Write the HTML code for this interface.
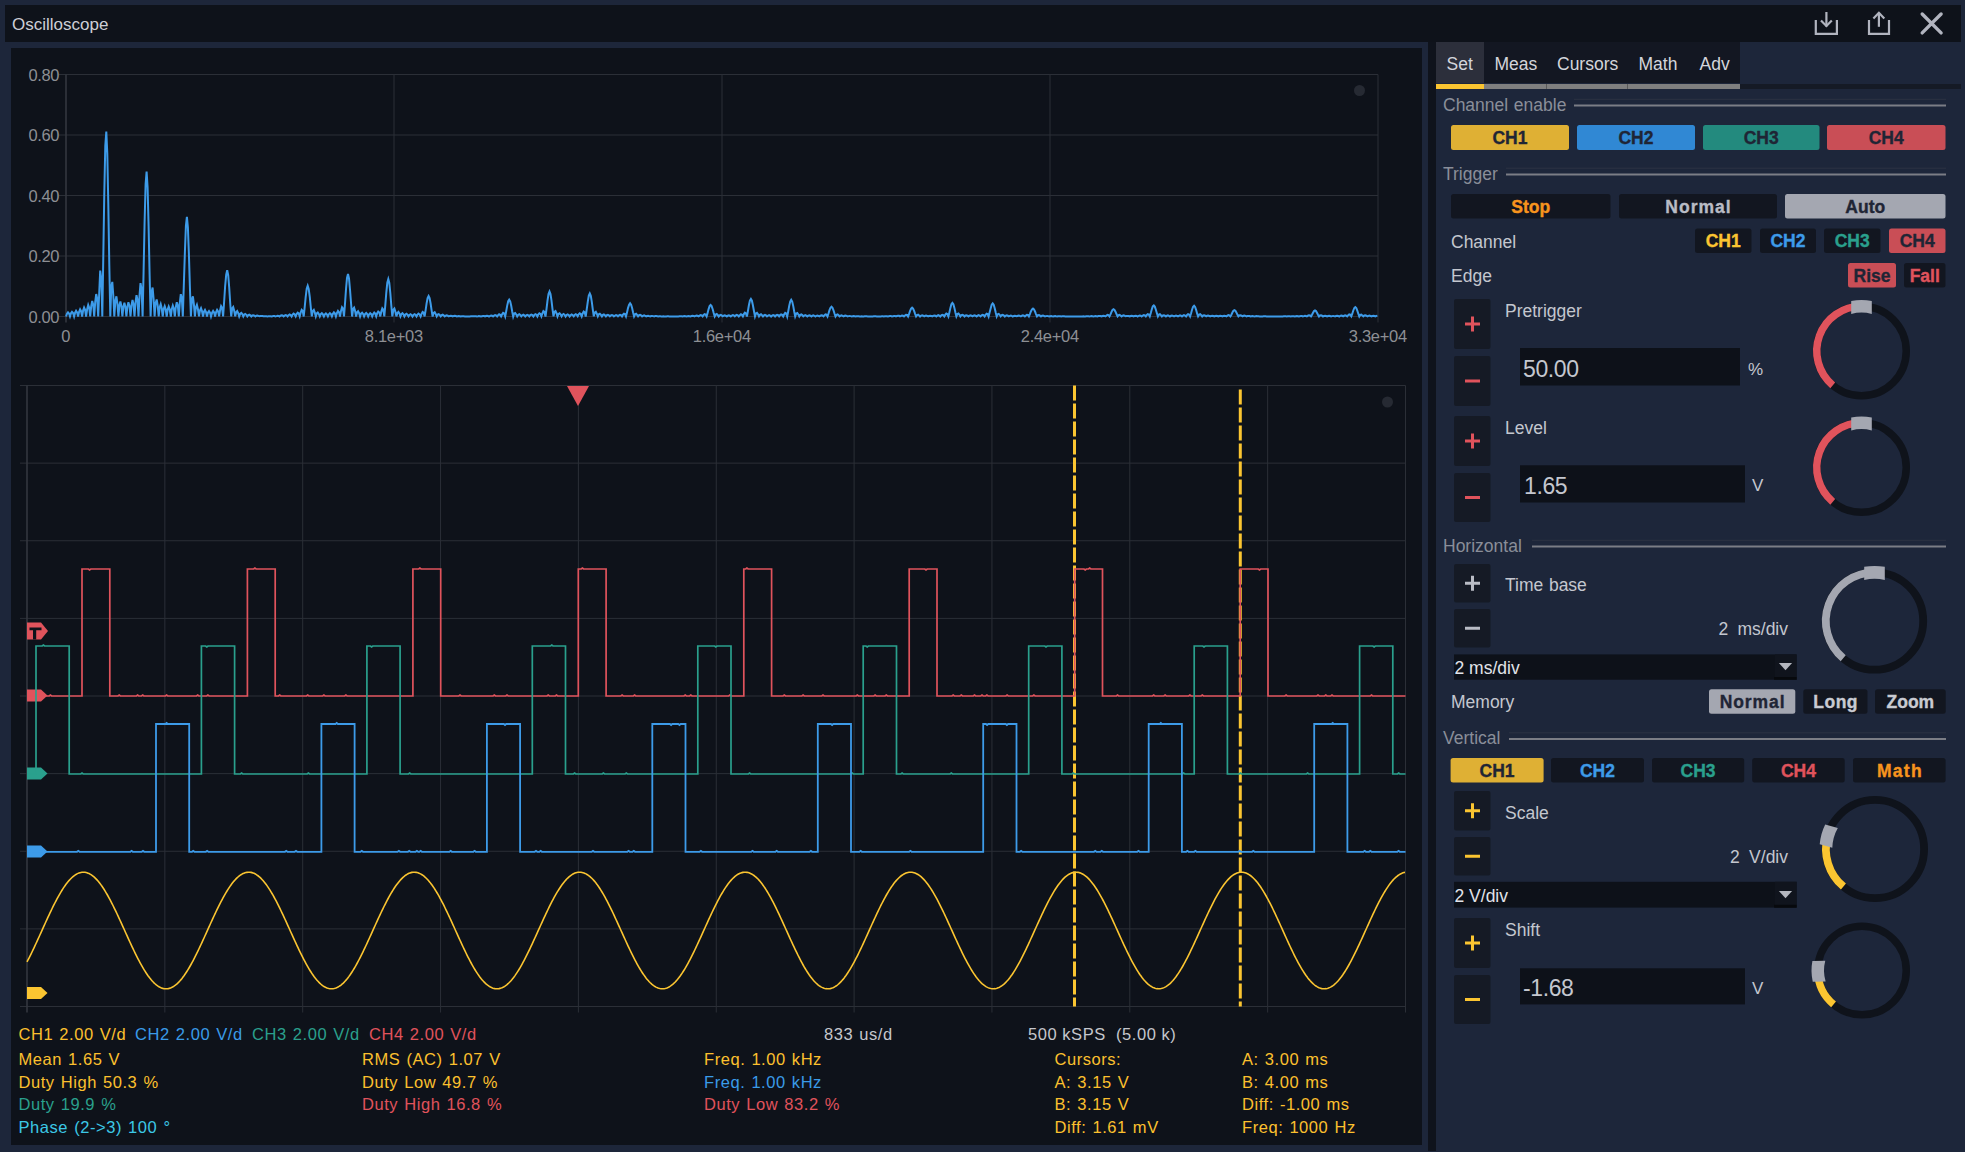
<!DOCTYPE html>
<html><head><meta charset="utf-8"><title>Oscilloscope</title>
<style>html,body{margin:0;padding:0;background:#1d263a;width:1965px;height:1152px;overflow:hidden}
text{font-family:"Liberation Sans", sans-serif}</style></head>
<body><svg width="1965" height="1152" viewBox="0 0 1965 1152" style="display:block"><rect x="0" y="0" width="1965" height="1152" fill="#1d263a" />
<rect x="5" y="5" width="1956" height="37" fill="#0e121a" />
<text x="12" y="29.6" font-size="17" fill="#cdcfd6" style="white-space:pre" >Oscilloscope</text>
<g fill="none" stroke="#b1b4bf" stroke-width="2.2"><path d="M1815.8,20 V33.8 H1836.9 V20"/><path d="M1826.4,12 V26.5"/><path d="M1821,20.5 L1826.4,26 L1831.8,20.5"/><path d="M1869,20 V33.8 H1889 V20"/><path d="M1878.9,12.8 V26.8"/><path d="M1873.4,18.4 L1878.9,12.8 L1884.3,18.4"/></g>
<path d="M1922.2,14 L1941.1,32.9 M1941.1,14 L1922.2,32.9" stroke="#b1b4bf" stroke-width="3.4" stroke-linecap="round"/>
<rect x="11" y="48" width="1411" height="1097" fill="#0e121a" />
<rect x="1428" y="42" width="8" height="1109" fill="#0f131c" />
<line x1="59" y1="74.5" x2="1378" y2="74.5" stroke="#2b2f37" stroke-width="1" />
<text x="59" y="80.9" font-size="16.5" fill="#8d8f94" text-anchor="end" letter-spacing="-0.4" style="white-space:pre" >0.80</text>
<line x1="59" y1="135.0" x2="1378" y2="135.0" stroke="#2b2f37" stroke-width="1" />
<text x="59" y="141.4" font-size="16.5" fill="#8d8f94" text-anchor="end" letter-spacing="-0.4" style="white-space:pre" >0.60</text>
<line x1="59" y1="195.5" x2="1378" y2="195.5" stroke="#2b2f37" stroke-width="1" />
<text x="59" y="201.9" font-size="16.5" fill="#8d8f94" text-anchor="end" letter-spacing="-0.4" style="white-space:pre" >0.40</text>
<line x1="59" y1="256.0" x2="1378" y2="256.0" stroke="#2b2f37" stroke-width="1" />
<text x="59" y="262.4" font-size="16.5" fill="#8d8f94" text-anchor="end" letter-spacing="-0.4" style="white-space:pre" >0.20</text>
<line x1="59" y1="316.5" x2="1378" y2="316.5" stroke="#2b2f37" stroke-width="1" />
<text x="59" y="322.9" font-size="16.5" fill="#8d8f94" text-anchor="end" letter-spacing="-0.4" style="white-space:pre" >0.00</text>
<line x1="66.0" y1="74.5" x2="66.0" y2="322.5" stroke="#34373f" stroke-width="1.6" />
<text x="65.8" y="341.8" font-size="16.5" fill="#8d8f94" text-anchor="middle" letter-spacing="-0.3" style="white-space:pre" >0</text>
<line x1="394.0" y1="74.5" x2="394.0" y2="322.5" stroke="#2b2f37" stroke-width="1" />
<text x="393.8" y="341.8" font-size="16.5" fill="#8d8f94" text-anchor="middle" letter-spacing="-0.3" style="white-space:pre" >8.1e+03</text>
<line x1="722.0" y1="74.5" x2="722.0" y2="322.5" stroke="#2b2f37" stroke-width="1" />
<text x="721.8" y="341.8" font-size="16.5" fill="#8d8f94" text-anchor="middle" letter-spacing="-0.3" style="white-space:pre" >1.6e+04</text>
<line x1="1050.0" y1="74.5" x2="1050.0" y2="322.5" stroke="#2b2f37" stroke-width="1" />
<text x="1049.8" y="341.8" font-size="16.5" fill="#8d8f94" text-anchor="middle" letter-spacing="-0.3" style="white-space:pre" >2.4e+04</text>
<line x1="1378.0" y1="74.5" x2="1378.0" y2="322.5" stroke="#2b2f37" stroke-width="1" />
<text x="1377.8" y="341.8" font-size="16.5" fill="#8d8f94" text-anchor="middle" letter-spacing="-0.3" style="white-space:pre" >3.3e+04</text>
<circle cx="1359.5" cy="90.5" r="5.5" fill="#262a33"/>
<polyline points="66.0,316.5 67.0,313.7 68.0,312.4 69.0,313.5 70.0,316.5 71.0,313.3 72.0,311.8 73.1,313.0 74.1,316.5 75.1,312.7 76.1,310.8 77.1,312.3 78.1,316.5 79.1,311.8 80.1,309.4 81.1,311.2 82.1,316.5 83.1,310.6 84.1,307.6 85.1,309.8 86.1,316.5 87.2,308.9 88.2,305.0 89.2,307.8 90.2,316.4 91.2,306.3 92.2,300.9 93.2,304.5 94.2,316.5 95.2,302.1 96.2,294.0 97.2,298.7 98.2,316.5 99.2,293.3 100.2,270.6 101.3,278.5 102.3,316.4 103.3,256.5 104.3,192.6 105.3,145.7 106.3,131.5 107.3,153.9 108.3,204.2 109.3,264.7 110.3,316.4 111.3,286.7 112.3,281.9 113.3,295.8 114.3,316.5 115.4,300.6 116.4,296.3 117.4,303.5 118.4,316.4 119.4,305.3 120.4,301.4 121.4,306.2 122.4,316.4 123.4,306.7 124.4,302.8 125.4,306.8 126.4,316.4 127.4,306.6 128.4,302.2 129.5,306.1 130.5,316.4 131.5,305.4 132.5,300.0 133.5,304.2 134.5,316.4 135.5,302.6 136.5,295.2 137.5,300.0 138.5,316.5 139.5,295.9 140.5,283.1 141.5,288.6 142.6,316.5 143.6,271.2 144.6,221.8 145.6,184.3 146.6,171.5 147.6,187.6 148.6,226.4 149.6,274.4 150.6,316.4 151.6,291.8 152.6,287.6 153.6,299.1 154.6,316.5 155.6,303.2 156.7,299.5 157.7,305.6 158.7,316.5 159.7,307.2 160.7,304.2 161.7,308.3 162.7,316.5 163.7,308.9 164.7,306.1 165.7,309.3 166.7,316.5 167.7,309.5 168.7,306.5 169.7,309.3 170.8,316.5 171.8,309.0 172.8,305.5 173.8,308.4 174.8,316.4 175.8,307.1 176.8,302.2 177.8,305.4 178.8,316.4 179.8,302.9 180.8,294.2 181.8,297.8 182.8,316.4 183.8,285.7 184.9,251.9 185.9,226.0 186.9,216.8 187.9,227.5 188.9,254.1 189.9,287.4 190.9,316.4 191.9,299.2 192.9,296.3 193.9,304.4 194.9,316.5 195.9,307.2 196.9,304.8 197.9,309.0 199.0,316.4 200.0,310.2 201.0,308.2 202.0,311.1 203.0,316.5 204.0,311.7 205.0,310.0 206.0,312.1 207.0,316.4 208.0,312.5 209.0,311.0 210.0,312.6 211.0,316.5 212.1,312.7 213.1,311.0 214.1,312.5 215.1,316.4 216.1,312.1 217.1,309.8 218.1,311.4 219.1,316.4 220.1,310.1 221.1,306.1 222.1,307.8 223.1,316.5 224.1,302.3 225.1,286.7 226.2,274.6 227.2,270.3 228.2,275.2 229.2,287.5 230.2,303.0 231.2,316.4 232.2,308.4 233.2,307.0 234.2,310.8 235.2,316.3 236.2,312.2 237.2,311.1 238.2,313.1 239.2,316.4 240.3,313.6 241.3,312.8 242.3,314.1 243.3,316.4 244.3,314.5 245.3,313.9 246.3,314.8 247.3,316.4 248.3,315.1 249.3,314.6 250.3,315.3 251.3,316.5 252.3,315.5 253.3,315.2 254.4,315.6 255.4,316.5 256.4,315.8 257.4,315.6 258.4,315.9 259.4,316.3 260.4,316.1 261.4,316.0 262.4,316.1 263.4,316.3 264.4,316.3 265.4,316.3 266.4,316.3 267.4,316.4 268.5,316.3 269.5,316.2 270.5,316.3 271.5,316.5 272.5,316.2 273.5,315.9 274.5,316.0 275.5,316.4 276.5,316.1 277.5,315.7 278.5,315.9 279.5,316.5 280.5,315.7 281.6,315.3 282.6,315.5 283.6,316.4 284.6,315.6 285.6,315.0 286.6,315.3 287.6,316.5 288.6,315.2 289.6,314.5 290.6,315.0 291.6,316.5 292.6,314.6 293.6,313.6 294.6,314.2 295.7,316.4 296.7,314.1 297.7,312.6 298.7,313.4 299.7,316.3 300.7,312.5 301.7,309.9 302.7,310.9 303.7,316.5 304.7,307.2 305.7,296.8 306.7,288.7 307.7,285.7 308.7,288.9 309.8,297.1 310.8,307.5 311.8,316.3 312.8,310.9 313.8,309.9 314.8,312.5 315.8,316.4 316.8,313.4 317.8,312.5 318.8,313.9 319.8,316.4 320.8,314.1 321.8,313.2 322.8,314.2 323.9,316.5 324.9,314.3 325.9,313.4 326.9,314.3 327.9,316.4 328.9,314.2 329.9,313.1 330.9,314.0 331.9,316.4 332.9,313.8 333.9,312.4 334.9,313.4 335.9,316.5 337.0,312.9 338.0,310.9 339.0,312.1 340.0,316.5 341.0,310.9 342.0,307.2 343.0,308.6 344.0,316.4 345.0,303.6 346.0,289.2 347.0,278.0 348.0,273.9 349.0,278.3 350.0,289.5 351.1,303.8 352.1,316.5 353.1,309.0 354.1,307.7 355.1,311.1 356.1,316.5 357.1,312.3 358.1,311.2 359.1,313.1 360.1,316.4 361.1,313.5 362.1,312.6 363.1,313.9 364.1,316.4 365.2,313.9 366.2,313.0 367.2,314.1 368.2,316.5 369.2,314.2 370.2,313.2 371.2,314.1 372.2,316.4 373.2,313.9 374.2,312.6 375.2,313.6 376.2,316.4 377.2,313.2 378.2,311.5 379.3,312.6 380.3,316.4 381.3,311.6 382.3,308.4 383.3,309.7 384.3,316.4 385.3,305.2 386.3,292.6 387.3,282.8 388.3,279.2 389.3,283.0 390.3,292.9 391.3,305.4 392.3,316.4 393.4,309.8 394.4,308.6 395.4,311.7 396.4,316.4 397.4,312.9 398.4,311.9 399.4,313.5 400.4,316.4 401.4,314.0 402.4,313.2 403.4,314.3 404.4,316.5 405.4,314.5 406.5,313.8 407.5,314.6 408.5,316.4 409.5,314.9 410.5,314.2 411.5,314.9 412.5,316.5 413.5,314.9 414.5,314.2 415.5,314.8 416.5,316.5 417.5,314.6 418.5,313.6 419.5,314.3 420.6,316.5 421.6,313.8 422.6,312.0 423.6,312.7 424.6,316.4 425.6,310.3 426.6,303.4 427.6,298.0 428.6,296.0 429.6,298.0 430.6,303.5 431.6,310.4 432.6,316.5 433.6,312.9 434.7,312.2 435.7,313.9 436.7,316.4 437.7,314.6 438.7,314.1 439.7,315.0 440.7,316.4 441.7,315.1 442.7,314.7 443.7,315.3 444.7,316.4 445.7,315.7 446.7,315.3 447.7,315.7 448.8,316.4 449.8,315.9 450.8,315.7 451.8,316.0 452.8,316.4 453.8,315.9 454.8,315.8 455.8,316.0 456.8,316.4 457.8,316.2 458.8,316.1 459.8,316.2 460.8,316.5 461.8,316.3 462.9,316.3 463.9,316.3 464.9,316.4 465.9,316.4 466.9,316.4 467.9,316.4 468.9,316.4 469.9,316.4 470.9,316.3 471.9,316.3 472.9,316.3 473.9,316.3 474.9,316.2 476.0,316.3 477.0,316.4 478.0,316.3 479.0,316.1 480.0,316.2 481.0,316.5 482.0,316.2 483.0,316.0 484.0,316.1 485.0,316.5 486.0,316.0 487.0,315.7 488.0,315.9 489.0,316.5 490.1,315.8 491.1,315.5 492.1,315.7 493.1,316.5 494.1,315.6 495.1,315.1 496.1,315.4 497.1,316.4 498.1,315.1 499.1,314.3 500.1,314.8 501.1,316.4 502.1,314.3 503.1,312.9 504.2,313.5 505.2,316.4 506.2,311.3 507.2,305.6 508.2,301.2 509.2,299.6 510.2,301.3 511.2,305.8 512.2,311.5 513.2,316.5 514.2,313.5 515.2,313.0 516.2,314.4 517.2,316.4 518.3,314.7 519.3,314.2 520.3,314.9 521.3,316.3 522.3,315.2 523.3,314.7 524.3,315.3 525.3,316.5 526.3,315.4 527.3,314.9 528.3,315.4 529.3,316.4 530.3,315.1 531.3,314.6 532.4,315.1 533.4,316.5 534.4,314.9 535.4,314.1 536.4,314.7 537.4,316.5 538.4,314.4 539.4,313.3 540.4,313.9 541.4,316.4 542.4,313.3 543.4,311.1 544.4,311.9 545.5,316.5 546.5,309.0 547.5,300.6 548.5,294.0 549.5,291.5 550.5,294.1 551.5,300.7 552.5,309.1 553.5,316.4 554.5,311.9 555.5,311.1 556.5,313.2 557.5,316.5 558.5,314.0 559.6,313.3 560.6,314.4 561.6,316.4 562.6,314.6 563.6,314.0 564.6,314.8 565.6,316.5 566.6,315.0 567.6,314.4 568.6,315.0 569.6,316.5 570.6,315.1 571.6,314.4 572.6,315.0 573.7,316.4 574.7,314.9 575.7,314.2 576.7,314.8 577.7,316.3 578.7,314.4 579.7,313.3 580.7,314.0 581.7,316.4 582.7,313.5 583.7,311.5 584.7,312.3 585.7,316.5 586.7,309.5 587.8,301.7 588.8,295.6 589.8,293.4 590.8,295.8 591.8,301.9 592.8,309.6 593.8,316.3 594.8,312.5 595.8,311.8 596.8,313.7 597.8,316.4 598.8,314.2 599.8,313.7 600.8,314.7 601.9,316.4 602.9,314.9 603.9,314.4 604.9,315.2 605.9,316.4 606.9,315.2 607.9,314.8 608.9,315.3 609.9,316.4 610.9,315.4 611.9,315.0 612.9,315.4 613.9,316.4 615.0,315.5 616.0,315.0 617.0,315.4 618.0,316.4 619.0,315.4 620.0,314.8 621.0,315.2 622.0,316.4 623.0,314.7 624.0,313.6 625.0,314.0 626.0,316.4 627.0,312.6 628.0,308.1 629.1,304.7 630.1,303.3 631.1,304.6 632.1,308.0 633.1,312.4 634.1,316.3 635.1,314.3 636.1,313.8 637.1,314.9 638.1,316.4 639.1,315.2 640.1,314.8 641.1,315.4 642.1,316.4 643.2,315.7 644.2,315.4 645.2,315.8 646.2,316.4 647.2,316.0 648.2,315.8 649.2,316.1 650.2,316.4 651.2,316.0 652.2,315.9 653.2,316.1 654.2,316.4 655.2,316.1 656.2,316.1 657.3,316.2 658.3,316.5 659.3,316.3 660.3,316.3 661.3,316.4 662.3,316.4 663.3,316.3 664.3,316.4 665.3,316.5 666.3,316.4 667.3,316.3 668.3,316.3 669.3,316.4 670.4,316.5 671.4,316.5 672.4,316.4 673.4,316.4 674.4,316.4 675.4,316.4 676.4,316.5 677.4,316.5 678.4,316.4 679.4,316.3 680.4,316.2 681.4,316.3 682.4,316.5 683.4,316.3 684.5,316.1 685.5,316.2 686.5,316.4 687.5,316.2 688.5,316.1 689.5,316.2 690.5,316.4 691.5,316.0 692.5,315.8 693.5,315.9 694.5,316.4 695.5,315.9 696.5,315.6 697.5,315.8 698.6,316.4 699.6,315.6 700.6,315.1 701.6,315.4 702.6,316.5 703.6,315.0 704.6,314.1 705.6,314.5 706.6,316.4 707.6,312.9 708.6,309.1 709.6,306.1 710.6,305.0 711.6,306.1 712.7,309.2 713.7,313.0 714.7,316.4 715.7,314.5 716.7,314.0 717.7,315.0 718.7,316.5 719.7,315.3 720.7,314.9 721.7,315.4 722.7,316.3 723.7,315.7 724.7,315.4 725.7,315.7 726.8,316.4 727.8,315.6 728.8,315.3 729.8,315.7 730.8,316.4 731.8,315.5 732.8,315.1 733.8,315.4 734.8,316.4 735.8,315.4 736.8,314.9 737.8,315.3 738.8,316.4 739.9,315.1 740.9,314.3 741.9,314.8 742.9,316.4 743.9,314.1 744.9,312.7 745.9,313.3 746.9,316.5 747.9,311.2 748.9,305.3 749.9,300.6 750.9,298.9 751.9,300.7 752.9,305.3 754.0,311.2 755.0,316.3 756.0,313.4 757.0,312.8 758.0,314.2 759.0,316.4 760.0,314.8 761.0,314.3 762.0,315.1 763.0,316.4 764.0,315.3 765.0,314.8 766.0,315.3 767.0,316.4 768.1,315.5 769.1,315.0 770.1,315.5 771.1,316.5 772.1,315.5 773.1,315.0 774.1,315.4 775.1,316.5 776.1,315.4 777.1,314.8 778.1,315.2 779.1,316.4 780.1,315.1 781.1,314.4 782.2,314.9 783.2,316.4 784.2,314.3 785.2,312.9 786.2,313.4 787.2,316.5 788.2,311.5 789.2,305.9 790.2,301.5 791.2,299.8 792.2,301.5 793.2,305.9 794.2,311.5 795.2,316.4 796.3,313.5 797.3,313.0 798.3,314.4 799.3,316.4 800.3,314.9 801.3,314.4 802.3,315.1 803.3,316.4 804.3,315.5 805.3,315.1 806.3,315.6 807.3,316.4 808.3,315.6 809.4,315.3 810.4,315.7 811.4,316.5 812.4,315.7 813.4,315.4 814.4,315.8 815.4,316.5 816.4,315.8 817.4,315.5 818.4,315.8 819.4,316.4 820.4,315.6 821.4,315.2 822.4,315.5 823.5,316.4 824.5,315.2 825.5,314.4 826.5,314.7 827.5,316.5 828.5,313.5 829.5,310.2 830.5,307.7 831.5,306.7 832.5,307.7 833.5,310.3 834.5,313.5 835.5,316.4 836.5,314.9 837.6,314.5 838.6,315.3 839.6,316.4 840.6,315.7 841.6,315.4 842.6,315.8 843.6,316.4 844.6,315.8 845.6,315.6 846.6,315.9 847.6,316.4 848.6,316.1 849.6,315.9 850.6,316.1 851.7,316.4 852.7,316.2 853.7,316.1 854.7,316.2 855.7,316.4 856.7,316.2 857.7,316.2 858.7,316.3 859.7,316.5 860.7,316.4 861.7,316.3 862.7,316.4 863.7,316.4 864.7,316.3 865.8,316.3 866.8,316.3 867.8,316.4 868.8,316.4 869.8,316.5 870.8,316.5 871.8,316.4 872.8,316.4 873.8,316.3 874.8,316.3 875.8,316.3 876.8,316.4 877.8,316.4 878.9,316.4 879.9,316.4 880.9,316.4 881.9,316.3 882.9,316.3 883.9,316.4 884.9,316.3 885.9,316.2 886.9,316.2 887.9,316.4 888.9,316.2 889.9,316.1 890.9,316.1 891.9,316.4 893.0,316.2 894.0,316.0 895.0,316.1 896.0,316.4 897.0,315.9 898.0,315.7 899.0,315.8 900.0,316.4 901.0,315.9 902.0,315.5 903.0,315.7 904.0,316.5 905.0,315.4 906.0,314.7 907.1,314.9 908.1,316.5 909.1,313.9 910.1,310.9 911.1,308.6 912.1,307.7 913.1,308.6 914.1,310.9 915.1,313.8 916.1,316.4 917.1,315.0 918.1,314.7 919.1,315.4 920.1,316.5 921.2,315.6 922.2,315.3 923.2,315.7 924.2,316.3 925.2,315.8 926.2,315.5 927.2,315.8 928.2,316.4 929.2,315.9 930.2,315.7 931.2,315.9 932.2,316.4 933.2,315.8 934.2,315.5 935.3,315.7 936.3,316.5 937.3,315.7 938.3,315.2 939.3,315.6 940.3,316.5 941.3,315.4 942.3,314.8 943.3,315.1 944.3,316.5 945.3,314.7 946.3,313.6 947.3,314.1 948.4,316.5 949.4,312.4 950.4,307.9 951.4,304.3 952.4,303.0 953.4,304.3 954.4,307.9 955.4,312.4 956.4,316.4 957.4,314.1 958.4,313.6 959.4,314.7 960.4,316.4 961.4,315.2 962.5,314.8 963.5,315.4 964.5,316.5 965.5,315.5 966.5,315.2 967.5,315.6 968.5,316.4 969.5,315.7 970.5,315.4 971.5,315.7 972.5,316.4 973.5,315.7 974.5,315.3 975.5,315.7 976.6,316.4 977.6,315.6 978.6,315.1 979.6,315.5 980.6,316.4 981.6,315.4 982.6,314.8 983.6,315.2 984.6,316.5 985.6,314.8 986.6,313.7 987.6,314.1 988.6,316.5 989.6,312.6 990.7,308.2 991.7,304.7 992.7,303.4 993.7,304.7 994.7,308.2 995.7,312.5 996.7,316.4 997.7,314.2 998.7,313.8 999.7,314.8 1000.7,316.3 1001.7,315.2 1002.7,314.8 1003.7,315.4 1004.8,316.5 1005.8,315.6 1006.8,315.3 1007.8,315.7 1008.8,316.4 1009.8,315.9 1010.8,315.6 1011.8,315.9 1012.8,316.5 1013.8,315.9 1014.8,315.7 1015.8,316.0 1016.8,316.3 1017.9,315.8 1018.9,315.6 1019.9,315.9 1020.9,316.4 1021.9,315.7 1022.9,315.3 1023.9,315.6 1024.9,316.4 1025.9,315.5 1026.9,314.8 1027.9,315.0 1028.9,316.5 1029.9,314.1 1030.9,311.5 1032.0,309.4 1033.0,308.6 1034.0,309.4 1035.0,311.5 1036.0,314.1 1037.0,316.4 1038.0,315.2 1039.0,315.0 1040.0,315.6 1041.0,316.4 1042.0,315.7 1043.0,315.5 1044.0,315.9 1045.0,316.4 1046.1,316.1 1047.1,315.9 1048.1,316.1 1049.1,316.5 1050.1,316.2 1051.1,316.1 1052.1,316.3 1053.1,316.4 1054.1,316.2 1055.1,316.1 1056.1,316.3 1057.1,316.4 1058.1,316.2 1059.1,316.2 1060.2,316.3 1061.2,316.4 1062.2,316.3 1063.2,316.2 1064.2,316.3 1065.2,316.4 1066.2,316.4 1067.2,316.4 1068.2,316.4 1069.2,316.5 1070.2,316.5 1071.2,316.5 1072.2,316.5 1073.2,316.5 1074.3,316.4 1075.3,316.4 1076.3,316.4 1077.3,316.4 1078.3,316.4 1079.3,316.4 1080.3,316.4 1081.3,316.5 1082.3,316.4 1083.3,316.3 1084.3,316.4 1085.3,316.4 1086.3,316.2 1087.4,316.2 1088.4,316.2 1089.4,316.4 1090.4,316.3 1091.4,316.1 1092.4,316.2 1093.4,316.4 1094.4,316.3 1095.4,316.1 1096.4,316.2 1097.4,316.4 1098.4,316.0 1099.4,315.9 1100.4,316.0 1101.5,316.5 1102.5,316.0 1103.5,315.7 1104.5,315.9 1105.5,316.4 1106.5,315.5 1107.5,314.9 1108.5,315.1 1109.5,316.4 1110.5,314.4 1111.5,311.9 1112.5,310.0 1113.5,309.3 1114.5,310.0 1115.6,311.9 1116.6,314.3 1117.6,316.4 1118.6,315.2 1119.6,314.9 1120.6,315.5 1121.6,316.4 1122.6,315.7 1123.6,315.4 1124.6,315.7 1125.6,316.3 1126.6,316.1 1127.6,315.9 1128.6,316.0 1129.7,316.5 1130.7,316.0 1131.7,315.8 1132.7,316.0 1133.7,316.4 1134.7,315.9 1135.7,315.7 1136.7,315.9 1137.7,316.5 1138.7,315.8 1139.7,315.5 1140.7,315.7 1141.7,316.5 1142.8,315.6 1143.8,315.1 1144.8,315.4 1145.8,316.4 1146.8,315.0 1147.8,314.1 1148.8,314.5 1149.8,316.4 1150.8,313.1 1151.8,309.3 1152.8,306.4 1153.8,305.4 1154.8,306.6 1155.8,309.5 1156.9,313.2 1157.9,316.4 1158.9,314.5 1159.9,314.2 1160.9,315.1 1161.9,316.4 1162.9,315.4 1163.9,315.2 1164.9,315.7 1165.9,316.4 1166.9,315.6 1167.9,315.4 1168.9,315.8 1169.9,316.5 1171.0,315.8 1172.0,315.6 1173.0,315.9 1174.0,316.4 1175.0,315.8 1176.0,315.5 1177.0,315.8 1178.0,316.4 1179.0,315.8 1180.0,315.4 1181.0,315.7 1182.0,316.5 1183.0,315.6 1184.0,315.1 1185.1,315.5 1186.1,316.4 1187.1,315.0 1188.1,314.2 1189.1,314.5 1190.1,316.4 1191.1,313.2 1192.1,309.5 1193.1,306.7 1194.1,305.7 1195.1,306.9 1196.1,309.8 1197.1,313.4 1198.1,316.3 1199.2,314.5 1200.2,314.2 1201.2,315.1 1202.2,316.5 1203.2,315.5 1204.2,315.2 1205.2,315.7 1206.2,316.4 1207.2,315.7 1208.2,315.5 1209.2,315.8 1210.2,316.4 1211.2,315.9 1212.3,315.7 1213.3,316.0 1214.3,316.5 1215.3,316.0 1216.3,315.8 1217.3,316.0 1218.3,316.5 1219.3,316.0 1220.3,315.8 1221.3,315.9 1222.3,316.4 1223.3,316.0 1224.3,315.7 1225.3,315.9 1226.4,316.4 1227.4,315.6 1228.4,315.1 1229.4,315.3 1230.4,316.4 1231.4,314.7 1232.4,312.5 1233.4,310.8 1234.4,310.2 1235.4,310.8 1236.4,312.4 1237.4,314.6 1238.4,316.4 1239.4,315.4 1240.5,315.2 1241.5,315.7 1242.5,316.4 1243.5,315.8 1244.5,315.6 1245.5,315.9 1246.5,316.4 1247.5,316.1 1248.5,316.0 1249.5,316.1 1250.5,316.5 1251.5,316.2 1252.5,316.1 1253.5,316.3 1254.6,316.4 1255.6,316.2 1256.6,316.1 1257.6,316.2 1258.6,316.3 1259.6,316.5 1260.6,316.4 1261.6,316.4 1262.6,316.4 1263.6,316.3 1264.6,316.3 1265.6,316.3 1266.6,316.4 1267.6,316.4 1268.7,316.4 1269.7,316.4 1270.7,316.4 1271.7,316.4 1272.7,316.4 1273.7,316.4 1274.7,316.4 1275.7,316.4 1276.7,316.4 1277.7,316.5 1278.7,316.4 1279.7,316.4 1280.7,316.4 1281.8,316.4 1282.8,316.4 1283.8,316.3 1284.8,316.3 1285.8,316.3 1286.8,316.4 1287.8,316.3 1288.8,316.2 1289.8,316.3 1290.8,316.4 1291.8,316.3 1292.8,316.2 1293.8,316.3 1294.8,316.5 1295.9,316.2 1296.9,316.1 1297.9,316.2 1298.9,316.5 1299.9,316.2 1300.9,315.9 1301.9,316.0 1302.9,316.4 1303.9,316.1 1304.9,315.8 1305.9,316.0 1306.9,316.4 1307.9,315.7 1308.9,315.2 1310.0,315.4 1311.0,316.4 1312.0,314.7 1313.0,312.7 1314.0,311.1 1315.0,310.5 1316.0,311.1 1317.0,312.7 1318.0,314.7 1319.0,316.5 1320.0,315.4 1321.0,315.2 1322.0,315.7 1323.0,316.5 1324.1,315.9 1325.1,315.7 1326.1,316.0 1327.1,316.4 1328.1,316.0 1329.1,315.8 1330.1,316.0 1331.1,316.4 1332.1,316.1 1333.1,315.9 1334.1,316.1 1335.1,316.4 1336.1,315.9 1337.1,315.7 1338.2,315.9 1339.2,316.5 1340.2,315.9 1341.2,315.6 1342.2,315.8 1343.2,316.4 1344.2,315.7 1345.2,315.3 1346.2,315.6 1347.2,316.4 1348.2,315.2 1349.2,314.4 1350.2,314.7 1351.3,316.4 1352.3,313.7 1353.3,310.5 1354.3,308.0 1355.3,307.1 1356.3,308.1 1357.3,310.6 1358.3,313.7 1359.3,316.5 1360.3,314.9 1361.3,314.6 1362.3,315.4 1363.3,316.4 1364.3,315.5 1365.4,315.3 1366.4,315.7 1367.4,316.4 1368.4,315.8 1369.4,315.5 1370.4,315.8 1371.4,316.4 1372.4,316.0 1373.4,315.7 1374.4,316.0 1375.4,316.4 1376.4,315.9 1377.4,315.6" fill="none" stroke="#3d9be9" stroke-width="2" stroke-linejoin="miter"/>
<line x1="20" y1="385.5" x2="1405.5" y2="385.5" stroke="#2b2f37" stroke-width="1" />
<line x1="20" y1="463.125" x2="1405.5" y2="463.125" stroke="#2b2f37" stroke-width="1" />
<line x1="20" y1="540.75" x2="1405.5" y2="540.75" stroke="#2b2f37" stroke-width="1" />
<line x1="20" y1="618.375" x2="1405.5" y2="618.375" stroke="#2b2f37" stroke-width="1" />
<line x1="20" y1="696.0" x2="1405.5" y2="696.0" stroke="#2b2f37" stroke-width="1" />
<line x1="20" y1="773.625" x2="1405.5" y2="773.625" stroke="#2b2f37" stroke-width="1" />
<line x1="20" y1="851.25" x2="1405.5" y2="851.25" stroke="#2b2f37" stroke-width="1" />
<line x1="20" y1="928.875" x2="1405.5" y2="928.875" stroke="#2b2f37" stroke-width="1" />
<line x1="20" y1="1006.5" x2="1405.5" y2="1006.5" stroke="#2b2f37" stroke-width="1" />
<line x1="27.0" y1="385.5" x2="27.0" y2="1012.5" stroke="#34373f" stroke-width="1.6" />
<line x1="164.85" y1="385.5" x2="164.85" y2="1012.5" stroke="#2b2f37" stroke-width="1" />
<line x1="302.7" y1="385.5" x2="302.7" y2="1012.5" stroke="#2b2f37" stroke-width="1" />
<line x1="440.55" y1="385.5" x2="440.55" y2="1012.5" stroke="#2b2f37" stroke-width="1" />
<line x1="578.4" y1="385.5" x2="578.4" y2="1012.5" stroke="#2b2f37" stroke-width="1" />
<line x1="716.25" y1="385.5" x2="716.25" y2="1012.5" stroke="#2b2f37" stroke-width="1" />
<line x1="854.1" y1="385.5" x2="854.1" y2="1012.5" stroke="#2b2f37" stroke-width="1" />
<line x1="991.95" y1="385.5" x2="991.95" y2="1012.5" stroke="#2b2f37" stroke-width="1" />
<line x1="1129.8" y1="385.5" x2="1129.8" y2="1012.5" stroke="#2b2f37" stroke-width="1" />
<line x1="1267.65" y1="385.5" x2="1267.65" y2="1012.5" stroke="#2b2f37" stroke-width="1" />
<line x1="1405.5" y1="385.5" x2="1405.5" y2="1012.5" stroke="#2b2f37" stroke-width="1" />
<circle cx="1387.5" cy="402" r="5.5" fill="#262a33"/>
<path d="M567,386 L589,386 L578,406 Z" fill="#e0535c"/>
<path d="M27,689.5 L41,689.5 L47.5,695.5 L41,701.5 L27,701.5 Z" fill="#e0535c"/>
<path d="M27,767.5 L41,767.5 L47.5,773.5 L41,779.5 L27,779.5 Z" fill="#2aa08d"/>
<path d="M27,845.5 L41,845.5 L47.5,851.5 L41,857.5 L27,857.5 Z" fill="#3d9be9"/>
<path d="M27,987 L41,987 L47.5,993 L41,999 L27,999 Z" fill="#fbc531"/>
<path d="M27,622.5 L41,622.5 L48,631 L41,639.5 L27,639.5 Z" fill="#e0535c"/>
<path d="M29.5,627.5 H41.5 V630.3 H36.2 V639.5 H33 V630.3 H29.5 Z" fill="#0e121a"/>
<line x1="1074.5" y1="385.5" x2="1074.5" y2="1006.5" stroke="#fbc531" stroke-width="3" stroke-dasharray="15 3"/>
<line x1="1240.3" y1="389.5" x2="1240.3" y2="1006.5" stroke="#fbc531" stroke-width="3" stroke-dasharray="15 3"/>
<path d="M27.0,696.0 L37.0,696.0 L38.2,695.0 L39.4,696.0 L49.2,696.0 L50.4,695.0 L51.6,696.0 L82.0,696.0 L82.0,569.0 L88.4,569.0 L89.6,570.0 L90.8,569.0 L109.8,569.0 L109.8,696.0 L118.0,696.0 L119.2,695.0 L120.4,696.0 L136.4,696.0 L137.6,695.0 L138.8,696.0 L141.5,696.0 L142.7,695.0 L143.9,696.0 L165.4,696.0 L166.6,695.0 L167.8,696.0 L196.5,696.0 L197.7,695.0 L198.9,696.0 L206.7,696.0 L207.9,695.0 L209.1,696.0 L247.4,696.0 L247.4,569.0 L253.7,569.0 L254.9,568.0 L256.1,569.0 L275.2,569.0 L275.2,696.0 L278.5,696.0 L279.7,695.0 L280.9,696.0 L306.5,696.0 L307.7,695.0 L308.9,696.0 L322.7,696.0 L323.9,695.0 L325.1,696.0 L344.7,696.0 L345.9,695.0 L347.1,696.0 L412.9,696.0 L412.9,569.0 L418.7,569.0 L419.9,568.0 L421.1,569.0 L440.7,569.0 L440.7,696.0 L458.8,696.0 L460.0,695.0 L461.2,696.0 L493.1,696.0 L494.3,695.0 L495.5,696.0 L505.8,696.0 L507.0,695.0 L508.2,696.0 L547.0,696.0 L548.2,695.0 L549.4,696.0 L555.3,696.0 L556.5,695.0 L557.7,696.0 L578.3,696.0 L578.3,569.0 L581.2,569.0 L582.4,568.0 L583.6,569.0 L606.1,569.0 L606.1,696.0 L620.9,696.0 L622.1,695.0 L623.3,696.0 L633.4,696.0 L634.6,695.0 L635.8,696.0 L684.0,696.0 L685.2,695.0 L686.4,696.0 L689.6,696.0 L690.8,695.0 L692.0,696.0 L728.7,696.0 L729.9,695.0 L731.1,696.0 L743.8,696.0 L743.8,569.0 L745.7,569.0 L746.9,568.0 L748.1,569.0 L771.6,569.0 L771.6,696.0 L783.1,696.0 L784.3,695.0 L785.5,696.0 L801.9,696.0 L803.1,695.0 L804.3,696.0 L821.8,696.0 L823.0,695.0 L824.2,696.0 L856.1,696.0 L857.3,695.0 L858.5,696.0 L873.9,696.0 L875.1,695.0 L876.3,696.0 L885.1,696.0 L886.3,695.0 L887.5,696.0 L909.2,696.0 L909.2,569.0 L924.8,569.0 L926.0,570.0 L927.2,569.0 L937.0,569.0 L937.0,696.0 L952.0,696.0 L953.2,695.0 L954.4,696.0 L960.1,696.0 L961.3,695.0 L962.5,696.0 L973.3,696.0 L974.5,695.0 L975.7,696.0 L980.8,696.0 L982.0,695.0 L983.2,696.0 L985.7,696.0 L986.9,695.0 L988.1,696.0 L1005.9,696.0 L1007.1,695.0 L1008.3,696.0 L1032.7,696.0 L1033.9,695.0 L1035.1,696.0 L1074.7,696.0 L1074.7,569.0 L1084.0,569.0 L1085.2,570.0 L1086.4,569.0 L1088.5,569.0 L1089.7,568.0 L1090.9,569.0 L1102.5,569.0 L1102.5,696.0 L1116.3,696.0 L1117.5,695.0 L1118.7,696.0 L1152.5,696.0 L1153.7,695.0 L1154.9,696.0 L1163.9,696.0 L1165.1,695.0 L1166.3,696.0 L1188.7,696.0 L1189.9,695.0 L1191.1,696.0 L1201.1,696.0 L1202.3,695.0 L1203.5,696.0 L1240.2,696.0 L1240.2,569.0 L1258.3,569.0 L1259.5,570.0 L1260.7,569.0 L1268.0,569.0 L1268.0,696.0 L1284.9,696.0 L1286.1,695.0 L1287.3,696.0 L1316.8,696.0 L1318.0,695.0 L1319.2,696.0 L1324.6,696.0 L1325.8,695.0 L1327.0,696.0 L1330.8,696.0 L1332.0,695.0 L1333.2,696.0 L1370.3,696.0 L1371.5,695.0 L1372.7,696.0 L1405.5,696.0" fill="none" stroke="#e0535c" stroke-width="1.7"/>
<path d="M27.0,774.0 L36.0,774.0 L36.0,646.0 L42.2,646.0 L43.4,645.0 L44.6,646.0 L69.2,646.0 L69.2,774.0 L80.8,774.0 L82.0,773.0 L83.2,774.0 L201.4,774.0 L201.4,646.0 L205.6,646.0 L206.8,647.0 L208.0,646.0 L234.6,646.0 L234.6,774.0 L240.4,774.0 L241.6,773.0 L242.8,774.0 L307.2,774.0 L308.4,773.0 L309.6,774.0 L366.9,774.0 L366.9,646.0 L370.4,646.0 L371.6,647.0 L372.8,646.0 L400.1,646.0 L400.1,774.0 L408.5,774.0 L409.7,773.0 L410.9,774.0 L532.3,774.0 L532.3,646.0 L550.6,646.0 L551.8,645.0 L553.0,646.0 L565.5,646.0 L565.5,774.0 L573.4,774.0 L574.6,773.0 L575.8,774.0 L602.2,774.0 L603.4,773.0 L604.6,774.0 L625.1,774.0 L626.3,773.0 L627.5,774.0 L697.8,774.0 L697.8,646.0 L714.6,646.0 L715.8,647.0 L717.0,646.0 L731.0,646.0 L731.0,774.0 L748.4,774.0 L749.6,773.0 L750.8,774.0 L851.0,774.0 L852.2,773.0 L853.4,774.0 L863.2,774.0 L863.2,646.0 L866.0,646.0 L867.2,647.0 L868.4,646.0 L896.5,646.0 L896.5,774.0 L900.9,774.0 L902.1,773.0 L903.3,774.0 L950.1,774.0 L951.3,773.0 L952.5,774.0 L1028.7,774.0 L1028.7,646.0 L1044.8,646.0 L1046.0,647.0 L1047.2,646.0 L1061.9,646.0 L1061.9,774.0 L1072.0,774.0 L1073.2,773.0 L1074.4,774.0 L1182.4,774.0 L1183.6,773.0 L1184.8,774.0 L1194.2,774.0 L1194.2,646.0 L1202.8,646.0 L1204.0,647.0 L1205.2,646.0 L1227.4,646.0 L1227.4,774.0 L1239.2,774.0 L1240.4,773.0 L1241.6,774.0 L1306.4,774.0 L1307.6,773.0 L1308.8,774.0 L1359.6,774.0 L1359.6,646.0 L1372.9,646.0 L1374.1,647.0 L1375.3,646.0 L1392.8,646.0 L1392.8,774.0 L1397.5,774.0 L1398.7,773.0 L1399.9,774.0 L1405.5,774.0" fill="none" stroke="#2aa08d" stroke-width="1.7"/>
<path d="M27.0,851.8 L29.3,851.8 L30.5,850.8 L31.7,851.8 L41.9,851.8 L43.1,850.8 L44.3,851.8 L77.1,851.8 L78.3,850.8 L79.5,851.8 L130.4,851.8 L131.6,850.8 L132.8,851.8 L141.8,851.8 L143.0,850.8 L144.2,851.8 L156.0,851.8 L156.0,724.0 L165.4,724.0 L166.6,723.0 L167.8,724.0 L189.2,724.0 L189.2,851.8 L192.0,851.8 L193.2,850.8 L194.4,851.8 L205.9,851.8 L207.1,850.8 L208.3,851.8 L285.0,851.8 L286.2,850.8 L287.4,851.8 L294.8,851.8 L296.0,850.8 L297.2,851.8 L321.4,851.8 L321.4,724.0 L335.5,724.0 L336.7,723.0 L337.9,724.0 L354.6,724.0 L354.6,851.8 L360.6,851.8 L361.8,850.8 L363.0,851.8 L397.7,851.8 L398.9,850.8 L400.1,851.8 L408.0,851.8 L409.2,850.8 L410.4,851.8 L415.7,851.8 L416.9,850.8 L418.1,851.8 L419.5,851.8 L420.7,850.8 L421.9,851.8 L449.5,851.8 L450.7,850.8 L451.9,851.8 L473.4,851.8 L474.6,850.8 L475.8,851.8 L486.9,851.8 L486.9,724.0 L503.8,724.0 L505.0,725.0 L506.2,724.0 L520.1,724.0 L520.1,851.8 L534.8,851.8 L536.0,850.8 L537.2,851.8 L539.5,851.8 L540.7,850.8 L541.9,851.8 L591.8,851.8 L593.0,850.8 L594.2,851.8 L627.4,851.8 L628.6,850.8 L629.8,851.8 L632.6,851.8 L633.8,850.8 L635.0,851.8 L652.3,851.8 L652.3,724.0 L669.9,724.0 L671.1,725.0 L672.3,724.0 L678.3,724.0 L679.5,725.0 L680.7,724.0 L685.5,724.0 L685.5,851.8 L699.7,851.8 L700.9,850.8 L702.1,851.8 L751.3,851.8 L752.5,850.8 L753.7,851.8 L775.5,851.8 L776.7,850.8 L777.9,851.8 L809.7,851.8 L810.9,850.8 L812.1,851.8 L817.8,851.8 L817.8,724.0 L830.9,724.0 L832.1,725.0 L833.3,724.0 L851.0,724.0 L851.0,851.8 L859.5,851.8 L860.7,850.8 L861.9,851.8 L909.2,851.8 L910.4,850.8 L911.6,851.8 L983.2,851.8 L983.2,724.0 L985.9,724.0 L987.1,725.0 L988.3,724.0 L1005.7,724.0 L1006.9,725.0 L1008.1,724.0 L1016.5,724.0 L1016.5,851.8 L1019.9,851.8 L1021.1,850.8 L1022.3,851.8 L1094.0,851.8 L1095.2,850.8 L1096.4,851.8 L1100.6,851.8 L1101.8,850.8 L1103.0,851.8 L1137.3,851.8 L1138.5,850.8 L1139.7,851.8 L1148.7,851.8 L1148.7,724.0 L1159.6,724.0 L1160.8,723.0 L1162.0,724.0 L1181.9,724.0 L1181.9,851.8 L1186.2,851.8 L1187.4,850.8 L1188.6,851.8 L1194.2,851.8 L1195.4,850.8 L1196.6,851.8 L1238.5,851.8 L1239.7,850.8 L1240.9,851.8 L1252.1,851.8 L1253.3,850.8 L1254.5,851.8 L1314.2,851.8 L1314.2,724.0 L1331.5,724.0 L1332.7,723.0 L1333.9,724.0 L1347.4,724.0 L1347.4,851.8 L1363.5,851.8 L1364.7,850.8 L1365.9,851.8 L1369.1,851.8 L1370.3,850.8 L1371.5,851.8 L1397.4,851.8 L1398.6,850.8 L1399.8,851.8 L1405.5,851.8" fill="none" stroke="#3d9be9" stroke-width="1.8"/>
<polyline points="27.0,961.83 28.0,959.94 29.0,958.01 30.0,956.03 31.0,954.03 32.0,951.98 33.0,949.91 34.0,947.81 35.0,945.68 36.0,943.53 37.0,941.37 38.0,939.19 39.0,936.99 40.0,934.79 41.0,932.58 42.0,930.36 43.0,928.15 44.0,925.94 45.0,923.73 46.0,921.54 47.0,919.36 48.0,917.20 49.0,915.05 50.0,912.93 51.0,910.83 52.0,908.76 53.0,906.72 54.0,904.72 55.0,902.75 56.0,900.82 57.0,898.94 58.0,897.10 59.0,895.31 60.0,893.57 61.0,891.89 62.0,890.26 63.0,888.68 64.0,887.17 65.0,885.72 66.0,884.34 67.0,883.02 68.0,881.77 69.0,880.59 70.0,879.48 71.0,878.45 72.0,877.49 73.0,876.60 74.0,875.80 75.0,875.07 76.0,874.43 77.0,873.86 78.0,873.38 79.0,872.98 80.0,872.66 81.0,872.42 82.0,872.27 83.0,872.20 84.0,872.22 85.0,872.32 86.0,872.51 87.0,872.77 88.0,873.13 89.0,873.56 90.0,874.08 91.0,874.67 92.0,875.35 93.0,876.11 94.0,876.95 95.0,877.86 96.0,878.85 97.0,879.91 98.0,881.05 99.0,882.26 100.0,883.54 101.0,884.88 102.0,886.29 103.0,887.77 104.0,889.31 105.0,890.90 106.0,892.55 107.0,894.26 108.0,896.02 109.0,897.83 110.0,899.69 111.0,901.59 112.0,903.53 113.0,905.51 114.0,907.53 115.0,909.58 116.0,911.67 117.0,913.77 118.0,915.91 119.0,918.06 120.0,920.23 121.0,922.42 122.0,924.62 123.0,926.82 124.0,929.03 125.0,931.25 126.0,933.46 127.0,935.67 128.0,937.87 129.0,940.06 130.0,942.24 131.0,944.40 132.0,946.54 133.0,948.65 134.0,950.74 135.0,952.80 136.0,954.83 137.0,956.83 138.0,958.78 139.0,960.70 140.0,962.57 141.0,964.40 142.0,966.17 143.0,967.90 144.0,969.57 145.0,971.18 146.0,972.74 147.0,974.23 148.0,975.67 149.0,977.03 150.0,978.33 151.0,979.56 152.0,980.72 153.0,981.81 154.0,982.83 155.0,983.76 156.0,984.63 157.0,985.41 158.0,986.11 159.0,986.74 160.0,987.28 161.0,987.74 162.0,988.12 163.0,988.42 164.0,988.63 165.0,988.76 166.0,988.80 167.0,988.76 168.0,988.64 169.0,988.43 170.0,988.14 171.0,987.76 172.0,987.31 173.0,986.77 174.0,986.15 175.0,985.45 176.0,984.67 177.0,983.81 178.0,982.87 179.0,981.86 180.0,980.78 181.0,979.62 182.0,978.40 183.0,977.10 184.0,975.74 185.0,974.31 186.0,972.82 187.0,971.26 188.0,969.65 189.0,967.98 190.0,966.26 191.0,964.49 192.0,962.66 193.0,960.79 194.0,958.88 195.0,956.93 196.0,954.93 197.0,952.91 198.0,950.85 199.0,948.76 200.0,946.64 201.0,944.50 202.0,942.34 203.0,940.17 204.0,937.98 205.0,935.78 206.0,933.57 207.0,931.36 208.0,929.14 209.0,926.93 210.0,924.73 211.0,922.53 212.0,920.34 213.0,918.17 214.0,916.01 215.0,913.88 216.0,911.77 217.0,909.69 218.0,907.63 219.0,905.61 220.0,903.63 221.0,901.69 222.0,899.78 223.0,897.92 224.0,896.11 225.0,894.35 226.0,892.64 227.0,890.98 228.0,889.38 229.0,887.84 230.0,886.37 231.0,884.95 232.0,883.60 233.0,882.32 234.0,881.11 235.0,879.97 236.0,878.90 237.0,877.91 238.0,876.99 239.0,876.15 240.0,875.39 241.0,874.71 242.0,874.10 243.0,873.58 244.0,873.15 245.0,872.79 246.0,872.52 247.0,872.33 248.0,872.22 249.0,872.20 250.0,872.27 251.0,872.41 252.0,872.64 253.0,872.96 254.0,873.35 255.0,873.83 256.0,874.40 257.0,875.04 258.0,875.76 259.0,876.56 260.0,877.44 261.0,878.40 262.0,879.43 263.0,880.53 264.0,881.71 265.0,882.95 266.0,884.27 267.0,885.65 268.0,887.10 269.0,888.61 270.0,890.18 271.0,891.80 272.0,893.49 273.0,895.22 274.0,897.01 275.0,898.85 276.0,900.73 277.0,902.65 278.0,904.62 279.0,906.62 280.0,908.66 281.0,910.73 282.0,912.82 283.0,914.94 284.0,917.09 285.0,919.25 286.0,921.43 287.0,923.62 288.0,925.83 289.0,928.04 290.0,930.25 291.0,932.46 292.0,934.68 293.0,936.88 294.0,939.08 295.0,941.26 296.0,943.43 297.0,945.58 298.0,947.70 299.0,949.81 300.0,951.88 301.0,953.92 302.0,955.93 303.0,957.91 304.0,959.84 305.0,961.73 306.0,963.58 307.0,965.38 308.0,967.13 309.0,968.82 310.0,970.46 311.0,972.05 312.0,973.57 313.0,975.03 314.0,976.43 315.0,977.76 316.0,979.02 317.0,980.21 318.0,981.33 319.0,982.38 320.0,983.35 321.0,984.25 322.0,985.07 323.0,985.81 324.0,986.47 325.0,987.05 326.0,987.54 327.0,987.96 328.0,988.29 329.0,988.54 330.0,988.71 331.0,988.79 332.0,988.79 333.0,988.70 334.0,988.53 335.0,988.28 336.0,987.94 337.0,987.52 338.0,987.02 339.0,986.44 340.0,985.77 341.0,985.03 342.0,984.20 343.0,983.30 344.0,982.33 345.0,981.28 346.0,980.15 347.0,978.96 348.0,977.69 349.0,976.36 350.0,974.96 351.0,973.49 352.0,971.97 353.0,970.38 354.0,968.74 355.0,967.04 356.0,965.29 357.0,963.49 358.0,961.64 359.0,959.75 360.0,957.81 361.0,955.83 362.0,953.82 363.0,951.78 364.0,949.70 365.0,947.60 366.0,945.47 367.0,943.32 368.0,941.15 369.0,938.97 370.0,936.77 371.0,934.56 372.0,932.35 373.0,930.14 374.0,927.93 375.0,925.72 376.0,923.51 377.0,921.32 378.0,919.14 379.0,916.98 380.0,914.84 381.0,912.72 382.0,910.62 383.0,908.55 384.0,906.52 385.0,904.52 386.0,902.56 387.0,900.63 388.0,898.75 389.0,896.92 390.0,895.14 391.0,893.40 392.0,891.72 393.0,890.10 394.0,888.53 395.0,887.02 396.0,885.58 397.0,884.20 398.0,882.89 399.0,881.65 400.0,880.47 401.0,879.37 402.0,878.35 403.0,877.39 404.0,876.52 405.0,875.72 406.0,875.00 407.0,874.37 408.0,873.81 409.0,873.33 410.0,872.94 411.0,872.63 412.0,872.40 413.0,872.26 414.0,872.20 415.0,872.23 416.0,872.34 417.0,872.53 418.0,872.81 419.0,873.17 420.0,873.61 421.0,874.13 422.0,874.74 423.0,875.43 424.0,876.19 425.0,877.04 426.0,877.96 427.0,878.95 428.0,880.02 429.0,881.17 430.0,882.38 431.0,883.67 432.0,885.02 433.0,886.44 434.0,887.92 435.0,889.46 436.0,891.06 437.0,892.72 438.0,894.44 439.0,896.20 440.0,898.02 441.0,899.88 442.0,901.78 443.0,903.73 444.0,905.72 445.0,907.74 446.0,909.79 447.0,911.87 448.0,913.99 449.0,916.12 450.0,918.28 451.0,920.45 452.0,922.64 453.0,924.84 454.0,927.04 455.0,929.25 456.0,931.47 457.0,933.68 458.0,935.89 459.0,938.09 460.0,940.28 461.0,942.45 462.0,944.61 463.0,946.75 464.0,948.86 465.0,950.95 466.0,953.01 467.0,955.03 468.0,957.02 469.0,958.98 470.0,960.89 471.0,962.75 472.0,964.58 473.0,966.35 474.0,968.07 475.0,969.73 476.0,971.34 477.0,972.89 478.0,974.38 479.0,975.81 480.0,977.17 481.0,978.46 482.0,979.68 483.0,980.84 484.0,981.92 485.0,982.92 486.0,983.85 487.0,984.71 488.0,985.48 489.0,986.18 490.0,986.80 491.0,987.33 492.0,987.78 493.0,988.15 494.0,988.44 495.0,988.64 496.0,988.76 497.0,988.80 498.0,988.75 499.0,988.62 500.0,988.40 501.0,988.10 502.0,987.72 503.0,987.26 504.0,986.71 505.0,986.08 506.0,985.37 507.0,984.58 508.0,983.72 509.0,982.78 510.0,981.76 511.0,980.67 512.0,979.50 513.0,978.27 514.0,976.97 515.0,975.60 516.0,974.16 517.0,972.66 518.0,971.10 519.0,969.49 520.0,967.81 521.0,966.08 522.0,964.31 523.0,962.48 524.0,960.60 525.0,958.69 526.0,956.73 527.0,954.73 528.0,952.70 529.0,950.64 530.0,948.55 531.0,946.43 532.0,944.29 533.0,942.13 534.0,939.95 535.0,937.76 536.0,935.56 537.0,933.35 538.0,931.14 539.0,928.92 540.0,926.71 541.0,924.51 542.0,922.31 543.0,920.12 544.0,917.95 545.0,915.80 546.0,913.67 547.0,911.56 548.0,909.48 549.0,907.43 550.0,905.41 551.0,903.43 552.0,901.49 553.0,899.59 554.0,897.74 555.0,895.93 556.0,894.18 557.0,892.47 558.0,890.82 559.0,889.23 560.0,887.69 561.0,886.22 562.0,884.81 563.0,883.47 564.0,882.20 565.0,880.99 566.0,879.86 567.0,878.80 568.0,877.81 569.0,876.90 570.0,876.07 571.0,875.32 572.0,874.64 573.0,874.05 574.0,873.54 575.0,873.11 576.0,872.76 577.0,872.49 578.0,872.31 579.0,872.22 580.0,872.21 581.0,872.28 582.0,872.43 583.0,872.67 584.0,872.99 585.0,873.40 586.0,873.89 587.0,874.46 588.0,875.11 589.0,875.84 590.0,876.65 591.0,877.53 592.0,878.50 593.0,879.53 594.0,880.64 595.0,881.83 596.0,883.08 597.0,884.40 598.0,885.79 599.0,887.25 600.0,888.76 601.0,890.34 602.0,891.97 603.0,893.66 604.0,895.40 605.0,897.19 606.0,899.03 607.0,900.92 608.0,902.85 609.0,904.82 610.0,906.82 611.0,908.86 612.0,910.93 613.0,913.03 614.0,915.16 615.0,917.30 616.0,919.47 617.0,921.65 618.0,923.84 619.0,926.05 620.0,928.26 621.0,930.47 622.0,932.69 623.0,934.90 624.0,937.10 625.0,939.29 626.0,941.48 627.0,943.64 628.0,945.79 629.0,947.91 630.0,950.01 631.0,952.09 632.0,954.13 633.0,956.13 634.0,958.10 635.0,960.03 636.0,961.92 637.0,963.76 638.0,965.56 639.0,967.30 640.0,968.99 641.0,970.62 642.0,972.20 643.0,973.72 644.0,975.17 645.0,976.56 646.0,977.89 647.0,979.14 648.0,980.33 649.0,981.44 650.0,982.48 651.0,983.44 652.0,984.33 653.0,985.14 654.0,985.88 655.0,986.53 656.0,987.10 657.0,987.59 658.0,988.00 659.0,988.32 660.0,988.56 661.0,988.72 662.0,988.79 663.0,988.78 664.0,988.69 665.0,988.51 666.0,988.25 667.0,987.90 668.0,987.47 669.0,986.96 670.0,986.37 671.0,985.70 672.0,984.95 673.0,984.12 674.0,983.21 675.0,982.23 676.0,981.17 677.0,980.04 678.0,978.83 679.0,977.56 680.0,976.22 681.0,974.81 682.0,973.34 683.0,971.81 684.0,970.22 685.0,968.57 686.0,966.87 687.0,965.11 688.0,963.31 689.0,961.45 690.0,959.55 691.0,957.61 692.0,955.64 693.0,953.62 694.0,951.57 695.0,949.49 696.0,947.39 697.0,945.25 698.0,943.10 699.0,940.93 700.0,938.75 701.0,936.55 702.0,934.34 703.0,932.13 704.0,929.92 705.0,927.71 706.0,925.50 707.0,923.30 708.0,921.10 709.0,918.93 710.0,916.77 711.0,914.62 712.0,912.51 713.0,910.41 714.0,908.35 715.0,906.32 716.0,904.32 717.0,902.36 718.0,900.44 719.0,898.57 720.0,896.74 721.0,894.96 722.0,893.23 723.0,891.56 724.0,889.94 725.0,888.38 726.0,886.88 727.0,885.44 728.0,884.07 729.0,882.76 730.0,881.53 731.0,880.36 732.0,879.27 733.0,878.25 734.0,877.30 735.0,876.44 736.0,875.65 737.0,874.94 738.0,874.31 739.0,873.76 740.0,873.29 741.0,872.91 742.0,872.60 743.0,872.39 744.0,872.25 745.0,872.20 746.0,872.23 747.0,872.35 748.0,872.55 749.0,872.84 750.0,873.21 751.0,873.66 752.0,874.19 753.0,874.80 754.0,875.50 755.0,876.27 756.0,877.12 757.0,878.05 758.0,879.06 759.0,880.14 760.0,881.29 761.0,882.51 762.0,883.80 763.0,885.16 764.0,886.58 765.0,888.07 766.0,889.62 767.0,891.23 768.0,892.89 769.0,894.61 770.0,896.38 771.0,898.20 772.0,900.07 773.0,901.98 774.0,903.93 775.0,905.92 776.0,907.94 777.0,910.00 778.0,912.08 779.0,914.20 780.0,916.34 781.0,918.49 782.0,920.67 783.0,922.86 784.0,925.06 785.0,927.26 786.0,929.48 787.0,931.69 788.0,933.90 789.0,936.11 790.0,938.31 791.0,940.50 792.0,942.67 793.0,944.83 794.0,946.96 795.0,949.07 796.0,951.16 797.0,953.21 798.0,955.23 799.0,957.22 800.0,959.17 801.0,961.08 802.0,962.94 803.0,964.75 804.0,966.52 805.0,968.24 806.0,969.90 807.0,971.50 808.0,973.04 809.0,974.53 810.0,975.94 811.0,977.30 812.0,978.58 813.0,979.80 814.0,980.95 815.0,982.02 816.0,983.02 817.0,983.94 818.0,984.79 819.0,985.56 820.0,986.24 821.0,986.85 822.0,987.38 823.0,987.82 824.0,988.19 825.0,988.46 826.0,988.66 827.0,988.77 828.0,988.80 829.0,988.74 830.0,988.60 831.0,988.38 832.0,988.07 833.0,987.68 834.0,987.20 835.0,986.65 836.0,986.01 837.0,985.30 838.0,984.50 839.0,983.63 840.0,982.68 841.0,981.65 842.0,980.55 843.0,979.38 844.0,978.14 845.0,976.83 846.0,975.46 847.0,974.01 848.0,972.51 849.0,970.94 850.0,969.32 851.0,967.64 852.0,965.91 853.0,964.12 854.0,962.29 855.0,960.41 856.0,958.49 857.0,956.53 858.0,954.53 859.0,952.50 860.0,950.43 861.0,948.34 862.0,946.22 863.0,944.07 864.0,941.91 865.0,939.73 866.0,937.54 867.0,935.34 868.0,933.13 869.0,930.92 870.0,928.70 871.0,926.49 872.0,924.28 873.0,922.09 874.0,919.90 875.0,917.74 876.0,915.58 877.0,913.46 878.0,911.35 879.0,909.27 880.0,907.23 881.0,905.22 882.0,903.24 883.0,901.30 884.0,899.41 885.0,897.56 886.0,895.75 887.0,894.00 888.0,892.30 889.0,890.66 890.0,889.07 891.0,887.54 892.0,886.08 893.0,884.68 894.0,883.34 895.0,882.07 896.0,880.88 897.0,879.75 898.0,878.70 899.0,877.72 900.0,876.82 901.0,875.99 902.0,875.25 903.0,874.58 904.0,873.99 905.0,873.49 906.0,873.07 907.0,872.73 908.0,872.47 909.0,872.30 910.0,872.21 911.0,872.21 912.0,872.29 913.0,872.45 914.0,872.70 915.0,873.03 916.0,873.44 917.0,873.94 918.0,874.52 919.0,875.18 920.0,875.91 921.0,876.73 922.0,877.63 923.0,878.60 924.0,879.64 925.0,880.76 926.0,881.95 927.0,883.21 928.0,884.54 929.0,885.93 930.0,887.39 931.0,888.92 932.0,890.50 933.0,892.14 934.0,893.83 935.0,895.58 936.0,897.37 937.0,899.22 938.0,901.11 939.0,903.04 940.0,905.02 941.0,907.03 942.0,909.07 943.0,911.14 944.0,913.24 945.0,915.37 946.0,917.52 947.0,919.69 948.0,921.87 949.0,924.06 950.0,926.27 951.0,928.48 952.0,930.69 953.0,932.91 954.0,935.12 955.0,937.32 956.0,939.51 957.0,941.69 958.0,943.86 959.0,946.00 960.0,948.13 961.0,950.22 962.0,952.29 963.0,954.33 964.0,956.33 965.0,958.30 966.0,960.22 967.0,962.11 968.0,963.94 969.0,965.73 970.0,967.47 971.0,969.16 972.0,970.78 973.0,972.36 974.0,973.87 975.0,975.31 976.0,976.70 977.0,978.01 978.0,979.26 979.0,980.44 980.0,981.55 981.0,982.58 982.0,983.54 983.0,984.42 984.0,985.22 985.0,985.94 986.0,986.59 987.0,987.15 988.0,987.63 989.0,988.03 990.0,988.35 991.0,988.58 992.0,988.73 993.0,988.80 994.0,988.78 995.0,988.67 996.0,988.49 997.0,988.22 998.0,987.86 999.0,987.43 1000.0,986.91 1001.0,986.31 1002.0,985.63 1003.0,984.87 1004.0,984.03 1005.0,983.12 1006.0,982.12 1007.0,981.06 1008.0,979.92 1009.0,978.71 1010.0,977.43 1011.0,976.08 1012.0,974.67 1013.0,973.19 1014.0,971.66 1015.0,970.06 1016.0,968.40 1017.0,966.69 1018.0,964.93 1019.0,963.12 1020.0,961.26 1021.0,959.36 1022.0,957.42 1023.0,955.44 1024.0,953.42 1025.0,951.36 1026.0,949.28 1027.0,947.17 1028.0,945.04 1029.0,942.89 1030.0,940.71 1031.0,938.53 1032.0,936.33 1033.0,934.12 1034.0,931.91 1035.0,929.70 1036.0,927.48 1037.0,925.28 1038.0,923.08 1039.0,920.89 1040.0,918.71 1041.0,916.55 1042.0,914.41 1043.0,912.29 1044.0,910.21 1045.0,908.14 1046.0,906.12 1047.0,904.12 1048.0,902.17 1049.0,900.25 1050.0,898.38 1051.0,896.56 1052.0,894.78 1053.0,893.06 1054.0,891.39 1055.0,889.78 1056.0,888.22 1057.0,886.73 1058.0,885.30 1059.0,883.93 1060.0,882.64 1061.0,881.41 1062.0,880.25 1063.0,879.16 1064.0,878.15 1065.0,877.21 1066.0,876.35 1067.0,875.57 1068.0,874.87 1069.0,874.25 1070.0,873.71 1071.0,873.25 1072.0,872.87 1073.0,872.58 1074.0,872.37 1075.0,872.24 1076.0,872.20 1077.0,872.24 1078.0,872.37 1079.0,872.58 1080.0,872.87 1081.0,873.25 1082.0,873.71 1083.0,874.25 1084.0,874.87 1085.0,875.57 1086.0,876.35 1087.0,877.21 1088.0,878.15 1089.0,879.16 1090.0,880.25 1091.0,881.41 1092.0,882.64 1093.0,883.93 1094.0,885.30 1095.0,886.73 1096.0,888.22 1097.0,889.78 1098.0,891.39 1099.0,893.06 1100.0,894.78 1101.0,896.56 1102.0,898.38 1103.0,900.25 1104.0,902.17 1105.0,904.12 1106.0,906.12 1107.0,908.14 1108.0,910.21 1109.0,912.29 1110.0,914.41 1111.0,916.55 1112.0,918.71 1113.0,920.89 1114.0,923.08 1115.0,925.28 1116.0,927.48 1117.0,929.70 1118.0,931.91 1119.0,934.12 1120.0,936.33 1121.0,938.53 1122.0,940.71 1123.0,942.89 1124.0,945.04 1125.0,947.17 1126.0,949.28 1127.0,951.36 1128.0,953.42 1129.0,955.44 1130.0,957.42 1131.0,959.36 1132.0,961.26 1133.0,963.12 1134.0,964.93 1135.0,966.69 1136.0,968.40 1137.0,970.06 1138.0,971.66 1139.0,973.19 1140.0,974.67 1141.0,976.08 1142.0,977.43 1143.0,978.71 1144.0,979.92 1145.0,981.06 1146.0,982.12 1147.0,983.12 1148.0,984.03 1149.0,984.87 1150.0,985.63 1151.0,986.31 1152.0,986.91 1153.0,987.43 1154.0,987.86 1155.0,988.22 1156.0,988.49 1157.0,988.67 1158.0,988.78 1159.0,988.80 1160.0,988.73 1161.0,988.58 1162.0,988.35 1163.0,988.03 1164.0,987.63 1165.0,987.15 1166.0,986.59 1167.0,985.94 1168.0,985.22 1169.0,984.42 1170.0,983.54 1171.0,982.58 1172.0,981.55 1173.0,980.44 1174.0,979.26 1175.0,978.01 1176.0,976.70 1177.0,975.31 1178.0,973.87 1179.0,972.36 1180.0,970.78 1181.0,969.16 1182.0,967.47 1183.0,965.73 1184.0,963.94 1185.0,962.11 1186.0,960.22 1187.0,958.30 1188.0,956.33 1189.0,954.33 1190.0,952.29 1191.0,950.22 1192.0,948.13 1193.0,946.00 1194.0,943.86 1195.0,941.69 1196.0,939.51 1197.0,937.32 1198.0,935.12 1199.0,932.91 1200.0,930.69 1201.0,928.48 1202.0,926.27 1203.0,924.06 1204.0,921.87 1205.0,919.69 1206.0,917.52 1207.0,915.37 1208.0,913.24 1209.0,911.14 1210.0,909.07 1211.0,907.03 1212.0,905.02 1213.0,903.04 1214.0,901.11 1215.0,899.22 1216.0,897.37 1217.0,895.58 1218.0,893.83 1219.0,892.14 1220.0,890.50 1221.0,888.92 1222.0,887.39 1223.0,885.93 1224.0,884.54 1225.0,883.21 1226.0,881.95 1227.0,880.76 1228.0,879.64 1229.0,878.60 1230.0,877.63 1231.0,876.73 1232.0,875.91 1233.0,875.18 1234.0,874.52 1235.0,873.94 1236.0,873.44 1237.0,873.03 1238.0,872.70 1239.0,872.45 1240.0,872.29 1241.0,872.21 1242.0,872.21 1243.0,872.30 1244.0,872.47 1245.0,872.73 1246.0,873.07 1247.0,873.49 1248.0,873.99 1249.0,874.58 1250.0,875.25 1251.0,875.99 1252.0,876.82 1253.0,877.72 1254.0,878.70 1255.0,879.75 1256.0,880.88 1257.0,882.07 1258.0,883.34 1259.0,884.68 1260.0,886.08 1261.0,887.54 1262.0,889.07 1263.0,890.66 1264.0,892.30 1265.0,894.00 1266.0,895.75 1267.0,897.56 1268.0,899.41 1269.0,901.30 1270.0,903.24 1271.0,905.22 1272.0,907.23 1273.0,909.27 1274.0,911.35 1275.0,913.46 1276.0,915.58 1277.0,917.74 1278.0,919.90 1279.0,922.09 1280.0,924.28 1281.0,926.49 1282.0,928.70 1283.0,930.92 1284.0,933.13 1285.0,935.34 1286.0,937.54 1287.0,939.73 1288.0,941.91 1289.0,944.07 1290.0,946.22 1291.0,948.34 1292.0,950.43 1293.0,952.50 1294.0,954.53 1295.0,956.53 1296.0,958.49 1297.0,960.41 1298.0,962.29 1299.0,964.12 1300.0,965.91 1301.0,967.64 1302.0,969.32 1303.0,970.94 1304.0,972.51 1305.0,974.01 1306.0,975.46 1307.0,976.83 1308.0,978.14 1309.0,979.38 1310.0,980.55 1311.0,981.65 1312.0,982.68 1313.0,983.63 1314.0,984.50 1315.0,985.30 1316.0,986.01 1317.0,986.65 1318.0,987.20 1319.0,987.68 1320.0,988.07 1321.0,988.38 1322.0,988.60 1323.0,988.74 1324.0,988.80 1325.0,988.77 1326.0,988.66 1327.0,988.46 1328.0,988.19 1329.0,987.82 1330.0,987.38 1331.0,986.85 1332.0,986.24 1333.0,985.56 1334.0,984.79 1335.0,983.94 1336.0,983.02 1337.0,982.02 1338.0,980.95 1339.0,979.80 1340.0,978.58 1341.0,977.30 1342.0,975.94 1343.0,974.53 1344.0,973.04 1345.0,971.50 1346.0,969.90 1347.0,968.24 1348.0,966.52 1349.0,964.75 1350.0,962.94 1351.0,961.08 1352.0,959.17 1353.0,957.22 1354.0,955.23 1355.0,953.21 1356.0,951.16 1357.0,949.07 1358.0,946.96 1359.0,944.83 1360.0,942.67 1361.0,940.50 1362.0,938.31 1363.0,936.11 1364.0,933.90 1365.0,931.69 1366.0,929.48 1367.0,927.26 1368.0,925.06 1369.0,922.86 1370.0,920.67 1371.0,918.49 1372.0,916.34 1373.0,914.20 1374.0,912.08 1375.0,910.00 1376.0,907.94 1377.0,905.92 1378.0,903.93 1379.0,901.98 1380.0,900.07 1381.0,898.20 1382.0,896.38 1383.0,894.61 1384.0,892.89 1385.0,891.23 1386.0,889.62 1387.0,888.07 1388.0,886.58 1389.0,885.16 1390.0,883.80 1391.0,882.51 1392.0,881.29 1393.0,880.14 1394.0,879.06 1395.0,878.05 1396.0,877.12 1397.0,876.27 1398.0,875.50 1399.0,874.80 1400.0,874.19 1401.0,873.66 1402.0,873.21 1403.0,872.84 1404.0,872.55 1405.0,872.35" fill="none" stroke="#fbc531" stroke-width="1.6"/>
<text x="18.5" y="1039.7" font-size="16.5" fill="#fcc02e" letter-spacing="0.55" word-spacing="1" style="white-space:pre" >CH1 2.00 V/d</text>
<text x="135" y="1039.7" font-size="16.5" fill="#3a9be8" letter-spacing="0.55" word-spacing="1" style="white-space:pre" >CH2 2.00 V/d</text>
<text x="252" y="1039.7" font-size="16.5" fill="#2aa08d" letter-spacing="0.55" word-spacing="1" style="white-space:pre" >CH3 2.00 V/d</text>
<text x="369" y="1039.7" font-size="16.5" fill="#e0535c" letter-spacing="0.55" word-spacing="1" style="white-space:pre" >CH4 2.00 V/d</text>
<text x="824" y="1039.7" font-size="16.5" fill="#c5c7cd" letter-spacing="0.55" word-spacing="1" style="white-space:pre" >833 us/d</text>
<text x="1028" y="1039.7" font-size="16.5" fill="#c5c7cd" letter-spacing="0.55" style="white-space:pre" >500 kSPS  (5.00 k)</text>
<text x="18.5" y="1064.8" font-size="16.5" fill="#fcc02e" letter-spacing="0.55" word-spacing="1" style="white-space:pre" >Mean 1.65 V</text>
<text x="18.5" y="1087.5" font-size="16.5" fill="#fcc02e" letter-spacing="0.55" word-spacing="1" style="white-space:pre" >Duty High 50.3 %</text>
<text x="18.5" y="1109.8" font-size="16.5" fill="#2aa08d" letter-spacing="0.55" word-spacing="1" style="white-space:pre" >Duty 19.9 %</text>
<text x="18.5" y="1132.7" font-size="16.5" fill="#3cc8e6" letter-spacing="0.55" word-spacing="1" style="white-space:pre" >Phase (2-&gt;3) 100 °</text>
<text x="362" y="1064.8" font-size="16.5" fill="#fcc02e" letter-spacing="0.55" word-spacing="1" style="white-space:pre" >RMS (AC) 1.07 V</text>
<text x="362" y="1087.5" font-size="16.5" fill="#fcc02e" letter-spacing="0.55" word-spacing="1" style="white-space:pre" >Duty Low 49.7 %</text>
<text x="362" y="1109.8" font-size="16.5" fill="#e0535c" letter-spacing="0.55" word-spacing="1" style="white-space:pre" >Duty High 16.8 %</text>
<text x="704" y="1064.8" font-size="16.5" fill="#fcc02e" letter-spacing="0.55" word-spacing="1" style="white-space:pre" >Freq. 1.00 kHz</text>
<text x="704" y="1087.5" font-size="16.5" fill="#3a9be8" letter-spacing="0.55" word-spacing="1" style="white-space:pre" >Freq. 1.00 kHz</text>
<text x="704" y="1109.8" font-size="16.5" fill="#e0535c" letter-spacing="0.55" word-spacing="1" style="white-space:pre" >Duty Low 83.2 %</text>
<text x="1054.5" y="1064.8" font-size="16.5" fill="#fcc02e" letter-spacing="0.55" word-spacing="1" style="white-space:pre" >Cursors:</text>
<text x="1054.5" y="1087.5" font-size="16.5" fill="#fcc02e" letter-spacing="0.55" word-spacing="1" style="white-space:pre" >A: 3.15 V</text>
<text x="1054.5" y="1109.8" font-size="16.5" fill="#fcc02e" letter-spacing="0.55" word-spacing="1" style="white-space:pre" >B: 3.15 V</text>
<text x="1054.5" y="1132.7" font-size="16.5" fill="#fcc02e" letter-spacing="0.55" word-spacing="1" style="white-space:pre" >Diff: 1.61 mV</text>
<text x="1242" y="1064.8" font-size="16.5" fill="#fcc02e" letter-spacing="0.55" word-spacing="1" style="white-space:pre" >A: 3.00 ms</text>
<text x="1242" y="1087.5" font-size="16.5" fill="#fcc02e" letter-spacing="0.55" word-spacing="1" style="white-space:pre" >B: 4.00 ms</text>
<text x="1242" y="1109.8" font-size="16.5" fill="#fcc02e" letter-spacing="0.55" word-spacing="1" style="white-space:pre" >Diff: -1.00 ms</text>
<text x="1242" y="1132.7" font-size="16.5" fill="#fcc02e" letter-spacing="0.55" word-spacing="1" style="white-space:pre" >Freq: 1000 Hz</text>
<rect x="1436" y="42" width="304" height="41" fill="#131722" />
<rect x="1436" y="42" width="48" height="41" fill="#2c2f3b" />
<rect x="1436" y="84" width="525" height="5" fill="#151a25" />
<rect x="1436" y="84" width="48" height="5" fill="#fbc531" />
<rect x="1484" y="84" width="256" height="5" fill="#7f7f7f" />
<rect x="1546" y="84" width="1" height="5" fill="#5a5a5a" />
<rect x="1627" y="84" width="1" height="5" fill="#5a5a5a" />
<text x="1446.5" y="70" font-size="17.5" fill="#d3d5db" style="white-space:pre" >Set</text>
<text x="1494.5" y="70" font-size="17.5" fill="#d3d5db" style="white-space:pre" >Meas</text>
<text x="1557" y="70" font-size="17.5" fill="#d3d5db" style="white-space:pre" >Cursors</text>
<text x="1638.5" y="70" font-size="17.5" fill="#d3d5db" style="white-space:pre" >Math</text>
<text x="1699.5" y="70" font-size="17.5" fill="#d3d5db" style="white-space:pre" >Adv</text>
<text x="1443" y="110.8" font-size="17.5" fill="#8a8e99" word-spacing="0.8" style="white-space:pre" >Channel enable</text>
<line x1="1574" y1="105.5" x2="1946" y2="105.5" stroke="#7b7d85" stroke-width="2" />
<line x1="1574" y1="99.3" x2="1946" y2="99.3" stroke="#2c3343" stroke-width="1" />
<rect x="1451" y="125" width="118" height="25" fill="#dfb034" rx="2.5" />
<text x="1510.0" y="143.8" font-size="17.5" fill="#1f2535" font-weight="700" stroke="#1f2535" stroke-width="0.35" text-anchor="middle" style="white-space:pre" >CH1</text>
<rect x="1577" y="125" width="118" height="25" fill="#3088d4" rx="2.5" />
<text x="1636.0" y="143.8" font-size="17.5" fill="#1f2535" font-weight="700" stroke="#1f2535" stroke-width="0.35" text-anchor="middle" style="white-space:pre" >CH2</text>
<rect x="1703" y="125" width="116.5" height="25" fill="#238a7e" rx="2.5" />
<text x="1761.25" y="143.8" font-size="17.5" fill="#1f2535" font-weight="700" stroke="#1f2535" stroke-width="0.35" text-anchor="middle" style="white-space:pre" >CH3</text>
<rect x="1827" y="125" width="118.5" height="25" fill="#c94e56" rx="2.5" />
<text x="1886.25" y="143.8" font-size="17.5" fill="#1f2535" font-weight="700" stroke="#1f2535" stroke-width="0.35" text-anchor="middle" style="white-space:pre" >CH4</text>
<text x="1443" y="179.7" font-size="17.5" fill="#8a8e99" word-spacing="0.8" style="white-space:pre" >Trigger</text>
<line x1="1506" y1="174.39999999999998" x2="1946" y2="174.39999999999998" stroke="#7b7d85" stroke-width="2" />
<line x1="1506" y1="168.2" x2="1946" y2="168.2" stroke="#2c3343" stroke-width="1" />
<rect x="1451" y="194" width="159.5" height="24.5" fill="#121620" rx="2.5" />
<text x="1530.75" y="212.55" font-size="17.5" fill="#f7941d" font-weight="700" stroke="#f7941d" stroke-width="0.35" text-anchor="middle" style="white-space:pre" >Stop</text>
<rect x="1619" y="194" width="158" height="24.5" fill="#121620" rx="2.5" />
<text x="1698.5" y="212.55" font-size="17.5" fill="#b9bcc5" font-weight="700" stroke="#b9bcc5" stroke-width="0.35" text-anchor="middle" letter-spacing="1" style="white-space:pre" >Normal</text>
<rect x="1785" y="194" width="160.5" height="24.5" fill="#a4a7b1" rx="2.5" />
<text x="1865.25" y="212.55" font-size="17.5" fill="#1f2535" font-weight="700" stroke="#1f2535" stroke-width="0.35" text-anchor="middle" style="white-space:pre" >Auto</text>
<text x="1451" y="247.5" font-size="17.5" fill="#c4c7cf" word-spacing="0.8" style="white-space:pre" >Channel</text>
<rect x="1695" y="228.5" width="56.5" height="24.5" fill="#121620" rx="2.5" />
<text x="1723.25" y="247.05" font-size="17.5" fill="#fbc531" font-weight="700" stroke="#fbc531" stroke-width="0.35" text-anchor="middle" style="white-space:pre" >CH1</text>
<rect x="1760" y="228.5" width="56" height="24.5" fill="#121620" rx="2.5" />
<text x="1788.0" y="247.05" font-size="17.5" fill="#3d9be9" font-weight="700" stroke="#3d9be9" stroke-width="0.35" text-anchor="middle" style="white-space:pre" >CH2</text>
<rect x="1824" y="228.5" width="56.5" height="24.5" fill="#121620" rx="2.5" />
<text x="1852.25" y="247.05" font-size="17.5" fill="#2aa08d" font-weight="700" stroke="#2aa08d" stroke-width="0.35" text-anchor="middle" style="white-space:pre" >CH3</text>
<rect x="1889" y="228.5" width="56.5" height="24.5" fill="#c94e56" rx="2.5" />
<text x="1917.25" y="247.05" font-size="17.5" fill="#1f2535" font-weight="700" stroke="#1f2535" stroke-width="0.35" text-anchor="middle" style="white-space:pre" >CH4</text>
<text x="1451" y="282" font-size="17.5" fill="#c4c7cf" word-spacing="0.8" style="white-space:pre" >Edge</text>
<rect x="1848" y="263" width="48" height="24.5" fill="#c94e56" rx="2.5" />
<text x="1872.0" y="281.55" font-size="17.5" fill="#1f2535" font-weight="700" stroke="#1f2535" stroke-width="0.35" text-anchor="middle" style="white-space:pre" >Rise</text>
<rect x="1904" y="263" width="41.5" height="24.5" fill="#121620" rx="2.5" />
<text x="1924.75" y="281.55" font-size="17.5" fill="#e0535c" font-weight="700" stroke="#e0535c" stroke-width="0.35" text-anchor="middle" style="white-space:pre" >Fall</text>
<rect x="1454" y="299" width="36.5" height="50" fill="#151a25" rx="2" />
<rect x="1465.0" y="322.5" width="15" height="3" fill="#e0535c" />
<rect x="1471.0" y="316.5" width="3" height="15" fill="#e0535c" />
<rect x="1454" y="356" width="36.5" height="50" fill="#151a25" rx="2" />
<rect x="1465.0" y="379.5" width="15" height="3" fill="#e0535c" />
<text x="1505" y="317" font-size="17.5" fill="#c4c7cf" word-spacing="0.8" style="white-space:pre" >Pretrigger</text>
<rect x="1520" y="348" width="220" height="37.5" fill="#0d1119" />
<text x="1523" y="376.5" font-size="23" fill="#c4c7cf" letter-spacing="-0.4" style="white-space:pre" >50.00</text>
<text x="1748" y="374.5" font-size="17" fill="#c4c7cf" style="white-space:pre" >%</text>
<circle cx="1861.5" cy="351" r="44.75" fill="none" stroke="#0f131b" stroke-width="7.5"/>
<path d="M1832.74,385.28 A44.75,44.75 0 0 1 1861.50,306.25" fill="none" stroke="#e0535c" stroke-width="7.5"/>
<path d="M1851.20,301.05 A51.0,51.0 0 0 1 1871.80,301.05 L1871.80,313.90 A38.5,38.5 0 0 0 1851.20,313.90 Z" fill="#a4a7b1"/>
<rect x="1454" y="416" width="36.5" height="50" fill="#151a25" rx="2" />
<rect x="1465.0" y="439.5" width="15" height="3" fill="#e0535c" />
<rect x="1471.0" y="433.5" width="3" height="15" fill="#e0535c" />
<rect x="1454" y="473" width="36.5" height="49" fill="#151a25" rx="2" />
<rect x="1465.0" y="496.0" width="15" height="3" fill="#e0535c" />
<text x="1505" y="434.4" font-size="17.5" fill="#c4c7cf" word-spacing="0.8" style="white-space:pre" >Level</text>
<rect x="1520" y="465.3" width="225" height="37.2" fill="#0d1119" />
<text x="1524" y="493.8" font-size="23" fill="#c4c7cf" letter-spacing="-0.4" style="white-space:pre" >1.65</text>
<text x="1752" y="491" font-size="17" fill="#c4c7cf" style="white-space:pre" >V</text>
<circle cx="1861.5" cy="467.5" r="44.75" fill="none" stroke="#0f131b" stroke-width="7.5"/>
<path d="M1832.74,501.78 A44.75,44.75 0 0 1 1861.50,422.75" fill="none" stroke="#e0535c" stroke-width="7.5"/>
<path d="M1851.20,417.55 A51.0,51.0 0 0 1 1871.80,417.55 L1871.80,430.40 A38.5,38.5 0 0 0 1851.20,430.40 Z" fill="#a4a7b1"/>
<text x="1443" y="551.8" font-size="17.5" fill="#8a8e99" word-spacing="0.8" style="white-space:pre" >Horizontal</text>
<line x1="1532" y1="546.5" x2="1946" y2="546.5" stroke="#7b7d85" stroke-width="2" />
<line x1="1532" y1="540.3" x2="1946" y2="540.3" stroke="#2c3343" stroke-width="1" />
<rect x="1454" y="564" width="36.5" height="38.5" fill="#151a25" rx="2" />
<rect x="1465.0" y="581.75" width="15" height="3" fill="#b9bcc5" />
<rect x="1471.0" y="575.75" width="3" height="15" fill="#b9bcc5" />
<rect x="1454" y="609" width="36.5" height="38.5" fill="#151a25" rx="2" />
<rect x="1465.0" y="626.75" width="15" height="3" fill="#b9bcc5" />
<text x="1505" y="591.4" font-size="17.5" fill="#c4c7cf" word-spacing="0.8" style="white-space:pre" >Time base</text>
<text x="1718.5" y="635" font-size="17.5" fill="#c4c7cf" style="white-space:pre" >2</text>
<text x="1788" y="635" font-size="17.5" fill="#c4c7cf" text-anchor="end" style="white-space:pre" >ms/div</text>
<rect x="1454" y="654.4" width="342.6" height="25.3" fill="#0d1119" />
<rect x="1775" y="654.4" width="21.6" height="25.3" fill="#10141d" />
<rect x="1774" y="677" width="22.6" height="2.7" fill="#07090d" />
<path d="M1778.9,663 L1792.1,663 L1785.5,670.2 Z" fill="#b3b6be"/>
<text x="1454.5" y="674.2" font-size="17.5" fill="#e2e4ea" style="white-space:pre" >2 ms/div</text>
<circle cx="1874.5" cy="621" r="48.7" fill="none" stroke="#0f131b" stroke-width="7.8"/>
<path d="M1843.20,658.31 A48.7,48.7 0 0 1 1874.50,572.30" fill="none" stroke="#a4a7b1" stroke-width="7.8"/>
<path d="M1864.20,566.87 A55.1,55.1 0 0 1 1884.80,566.87 L1884.80,579.97 A42.300000000000004,42.300000000000004 0 0 0 1864.20,579.97 Z" fill="#a4a7b1"/>
<text x="1451" y="707.5" font-size="17.5" fill="#c4c7cf" word-spacing="0.8" style="white-space:pre" >Memory</text>
<rect x="1709" y="689.3" width="86.3" height="24.4" fill="#a4a7b1" rx="2.5" />
<text x="1752.6000000000001" y="707.8" font-size="17.5" fill="#1f2535" font-weight="700" stroke="#1f2535" stroke-width="0.35" text-anchor="middle" letter-spacing="0.9" style="white-space:pre" >Normal</text>
<rect x="1803.3" y="689.3" width="64.2" height="24.4" fill="#121620" rx="2.5" />
<text x="1835.6499999999999" y="707.8" font-size="17.5" fill="#c9cbd2" font-weight="700" stroke="#c9cbd2" stroke-width="0.35" text-anchor="middle" letter-spacing="0.5" style="white-space:pre" >Long</text>
<rect x="1875" y="689.3" width="70.7" height="24.4" fill="#121620" rx="2.5" />
<text x="1910.35" y="707.8" font-size="17.5" fill="#c9cbd2" font-weight="700" stroke="#c9cbd2" stroke-width="0.35" text-anchor="middle" style="white-space:pre" >Zoom</text>
<text x="1443" y="744.3" font-size="17.5" fill="#8a8e99" word-spacing="0.8" style="white-space:pre" >Vertical</text>
<line x1="1509" y1="739.0" x2="1946" y2="739.0" stroke="#7b7d85" stroke-width="2" />
<line x1="1509" y1="732.8" x2="1946" y2="732.8" stroke="#2c3343" stroke-width="1" />
<rect x="1450.6" y="758" width="93" height="24.4" fill="#dfb034" rx="2.5" />
<text x="1497.1" y="776.5" font-size="17.5" fill="#1f2535" font-weight="700" stroke="#1f2535" stroke-width="0.35" text-anchor="middle" style="white-space:pre" >CH1</text>
<rect x="1551" y="758" width="93" height="24.4" fill="#121620" rx="2.5" />
<text x="1597.5" y="776.5" font-size="17.5" fill="#3d9be9" font-weight="700" stroke="#3d9be9" stroke-width="0.35" text-anchor="middle" style="white-space:pre" >CH2</text>
<rect x="1652" y="758" width="92.2" height="24.4" fill="#121620" rx="2.5" />
<text x="1698.1" y="776.5" font-size="17.5" fill="#2aa08d" font-weight="700" stroke="#2aa08d" stroke-width="0.35" text-anchor="middle" style="white-space:pre" >CH3</text>
<rect x="1752.2" y="758" width="92.5" height="24.4" fill="#121620" rx="2.5" />
<text x="1798.45" y="776.5" font-size="17.5" fill="#e0535c" font-weight="700" stroke="#e0535c" stroke-width="0.35" text-anchor="middle" style="white-space:pre" >CH4</text>
<rect x="1853" y="758" width="92.6" height="24.4" fill="#121620" rx="2.5" />
<text x="1899.95" y="776.5" font-size="17.5" fill="#f7941d" font-weight="700" stroke="#f7941d" stroke-width="0.35" text-anchor="middle" letter-spacing="1.3" style="white-space:pre" >Math</text>
<rect x="1454" y="791" width="36.5" height="39.5" fill="#151a25" rx="2" />
<rect x="1465.0" y="809.25" width="15" height="3" fill="#fbc531" />
<rect x="1471.0" y="803.25" width="3" height="15" fill="#fbc531" />
<rect x="1454" y="837" width="36.5" height="38.5" fill="#151a25" rx="2" />
<rect x="1465.0" y="854.75" width="15" height="3" fill="#fbc531" />
<text x="1505" y="819.4" font-size="17.5" fill="#c4c7cf" word-spacing="0.8" style="white-space:pre" >Scale</text>
<text x="1730" y="863.2" font-size="17.5" fill="#c4c7cf" style="white-space:pre" >2</text>
<text x="1788" y="863.2" font-size="17.5" fill="#c4c7cf" text-anchor="end" style="white-space:pre" >V/div</text>
<rect x="1454" y="881.8" width="342.6" height="25.8" fill="#0d1119" />
<rect x="1775" y="881.8" width="21.6" height="25.8" fill="#10141d" />
<rect x="1774" y="904.8" width="22.6" height="2.8" fill="#07090d" />
<path d="M1778.9,891.1 L1792.1,891.1 L1785.5,898.3 Z" fill="#b3b6be"/>
<text x="1454.5" y="901.8" font-size="17.5" fill="#e2e4ea" style="white-space:pre" >2 V/div</text>
<circle cx="1875" cy="849" r="49.1" fill="none" stroke="#0f131b" stroke-width="7.8"/>
<path d="M1843.44,886.61 A49.1,49.1 0 0 1 1827.69,835.88" fill="none" stroke="#fbc531" stroke-width="7.8"/>
<path d="M1819.70,844.35 A55.5,55.5 0 0 1 1825.20,824.50 L1837.82,828.00 A42.7,42.7 0 0 0 1832.32,847.85 Z" fill="#a4a7b1"/>
<rect x="1454" y="918" width="36.5" height="50" fill="#151a25" rx="2" />
<rect x="1465.0" y="941.5" width="15" height="3" fill="#fbc531" />
<rect x="1471.0" y="935.5" width="3" height="15" fill="#fbc531" />
<rect x="1454" y="975" width="36.5" height="49" fill="#151a25" rx="2" />
<rect x="1465.0" y="998.0" width="15" height="3" fill="#fbc531" />
<text x="1505" y="936.3" font-size="17.5" fill="#c4c7cf" word-spacing="0.8" style="white-space:pre" >Shift</text>
<rect x="1520" y="968.3" width="225" height="36.1" fill="#0d1119" />
<text x="1523" y="995.7" font-size="23" fill="#c4c7cf" letter-spacing="-0.4" style="white-space:pre" >-1.68</text>
<text x="1752" y="993.5" font-size="17" fill="#c4c7cf" style="white-space:pre" >V</text>
<circle cx="1862" cy="970.5" r="44.25" fill="none" stroke="#0f131b" stroke-width="7.5"/>
<path d="M1833.56,1004.40 A44.25,44.25 0 0 1 1817.76,971.27" fill="none" stroke="#fbc531" stroke-width="7.5"/>
<path d="M1812.75,981.66 A50.5,50.5 0 0 1 1812.39,961.06 L1825.25,960.84 A38.0,38.0 0 0 0 1825.61,981.44 Z" fill="#a4a7b1"/></svg></body></html>
